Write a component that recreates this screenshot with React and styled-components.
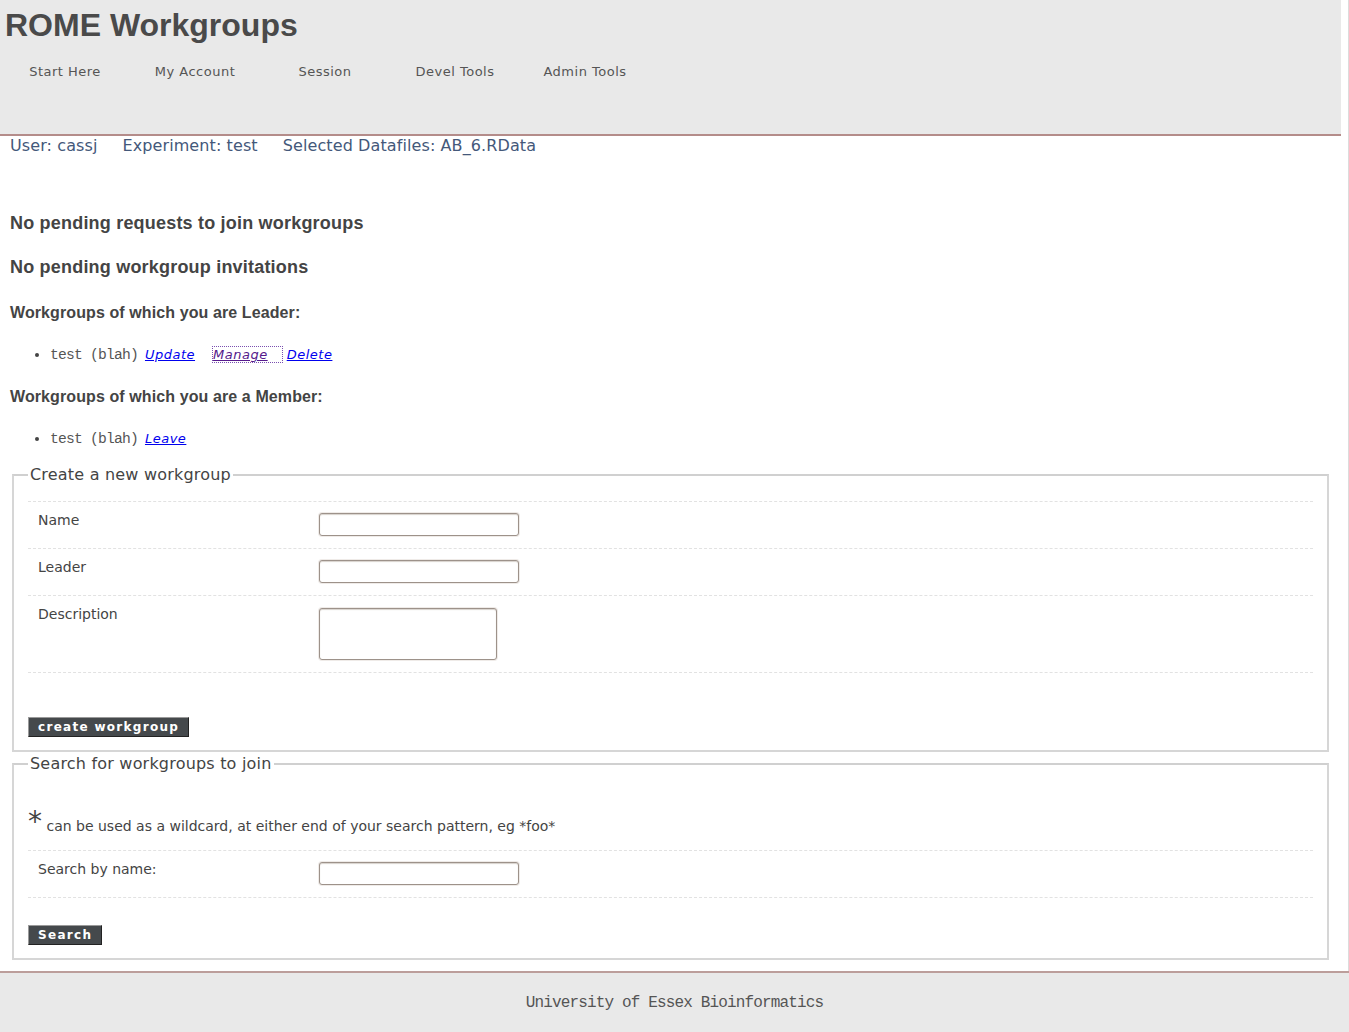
import React from 'react'
import styled, { createGlobalStyle } from 'styled-components'

const GlobalStyle = createGlobalStyle`
html, body {
    margin:0;
    padding:0;
    background:#fff;
}
body {
    font-family:"DejaVu Sans", Verdana, sans-serif;
    color:#444;
}
`

function FormRow({ label, children, top }) {
    return (
        <Row>
            <Label>{label}</Label>
            <Control $top={top}>{children}</Control>
        </Row>
    )
}

function App() {
    const navItems = ['Start Here', 'My Account', 'Session', 'Devel Tools', 'Admin Tools']

    return (
        <>
            <GlobalStyle />
            <Page>
                <Header>
                    <Title>ROME Workgroups</Title>
                    <Nav>
                        {navItems.map(item => <NavItem key={item}>{item}</NavItem>)}
                    </Nav>
                </Header>
                <Main>
                    <UserBar>
                        <span>User: cassj</span>
                        <span>Experiment: test</span>
                        <span>Selected Datafiles: AB_6.RData</span>
                    </UserBar>

                    <H3 $top={58}>No pending requests to join workgroups</H3>
                    <H3 $top={23}>No pending workgroup invitations</H3>

                    <H4 $top={25}>Workgroups of which you are Leader:</H4>
                    <List $top={23}>
                        <Item>
                            <Group>test (blah)</Group>
                            <Link href="#" $left={7}>Update</Link>
                            <Link href="#" $left={18} $visited>Manage</Link>
                            <Link href="#" $left={5}>Delete</Link>
                        </Item>
                    </List>

                    <H4 $top={22}>Workgroups of which you are a Member:</H4>
                    <List $top={23}>
                        <Item>
                            <Group>test (blah)</Group>
                            <Link href="#" $left={7}>Leave</Link>
                        </Item>
                    </List>

                    <Fieldset $top={16}>
                        <Legend>Create a new workgroup</Legend>
                        <Rows $top={17}>
                            <FormRow label="Name"><Input type="text" /></FormRow>
                            <FormRow label="Leader"><Input type="text" /></FormRow>
                            <FormRow label="Description" top={2}><TextArea /></FormRow>
                        </Rows>
                        <Button $top={44}>create workgroup</Button>
                    </Fieldset>

                    <Fieldset $top={2}>
                        <Legend>Search for workgroups to join</Legend>
                        <Hint><Star>*</Star> can be used as a wildcard, at either end of your search pattern, eg *foo*</Hint>
                        <Rows $top={12}>
                            <FormRow label="Search by name:"><Input type="text" /></FormRow>
                        </Rows>
                        <Button $top={27}>Search</Button>
                    </Fieldset>
                </Main>
            </Page>
            <Footer>University of Essex Bioinformatics</Footer>
        </>
    )
}

export default App

const Page = styled.div`
border-right:1px solid #dcdcdc;
padding-bottom:11px;
`
const Header = styled.div`
margin-right:7px;
height:134px;
background-color:#e9e9e9;
border-bottom:2px solid #b48c8a;
`
const Title = styled.h1`
margin:0;
padding:7px 0 0 5px;
font-family:"Liberation Sans", Arial, sans-serif;
font-size:32px;
line-height:37px;
font-weight:bold;
color:#4a4a4a;
`
const Nav = styled.ul`
display:flex;
margin:20px 0 0;
padding:0;
list-style:none;
`
const NavItem = styled.li`
width:130px;
text-align:center;
font-size:13px;
line-height:16px;
letter-spacing:0.5px;
color:#555;
`
const Main = styled.div`
padding:0 9px 0 10px;
margin-right:8px;
`
const UserBar = styled.div`
display:flex;
gap:25px;
font-size:16px;
line-height:19px;
letter-spacing:0.1px;
color:#44587a;
`
const H3 = styled.h3`
margin:${p => p.$top}px 0 0;
font-family:"Liberation Sans", Arial, sans-serif;
font-size:18px;
line-height:21px;
font-weight:bold;
color:#444;
letter-spacing:0.2px;
`
const H4 = styled.h4`
margin:${p => p.$top}px 0 0;
font-family:"Liberation Sans", Arial, sans-serif;
font-size:16px;
line-height:19px;
font-weight:bold;
color:#444;
letter-spacing:0.1px;
`
const List = styled.ul`
margin:${p => p.$top}px 0 0;
padding-left:40px;
`
const Item = styled.li`
font-size:13px;
line-height:20px;
color:#444;
`
const Group = styled.span`
font-family:"Liberation Mono", "Courier New", monospace;
font-size:14.67px;
letter-spacing:-0.8px;
color:#555;
`
const Link = styled.a`
margin-left:${p => p.$left}px;
font-style:italic;
font-size:13px;
letter-spacing:0.5px;
color:${p => p.$visited ? '#551a8b' : '#0000ee'};
text-decoration:underline;
${p => p.$visited && `
    outline:1px dotted #7a4fb0;
    padding-right:14px;
`}
`
const Fieldset = styled.fieldset`
margin:${p => p.$top}px 2px 0;
padding:0 14px 13px;
border:2px solid #d6d6d6;
border-top-color:#d0d0d0;
`
const Legend = styled.legend`
padding:0 2px;
font-size:16px;
line-height:19px;
letter-spacing:0.2px;
color:#444;
`
const Rows = styled.div`
margin-top:${p => p.$top}px;
border-bottom:1px dashed #e2e2e2;
`
const Row = styled.div`
display:grid;
grid-template-columns:281px 1fr;
align-items:start;
padding:10px 0 12px 10px;
border-top:1px dashed #e2e2e2;
`
const Label = styled.label`
font-size:14px;
line-height:17px;
color:#444;
`
const Control = styled.div`
margin-top:${p => p.$top ?? 1}px;
display:flex;
`
const Input = styled.input`
box-sizing:border-box;
width:200px;
height:23px;
margin:0;
border:1px solid #9d928a;
border-radius:3px;
box-shadow:0 0 0 1px #efebe8, inset 0 1px 1px #d8d2cc;
background:#fff;
`
const TextArea = styled.textarea`
box-sizing:border-box;
width:178px;
height:52px;
margin:0;
resize:none;
border:1px solid #9d928a;
border-radius:3px;
box-shadow:0 0 0 1px #efebe8, inset 0 1px 1px #d8d2cc;
background:#fff;
`
const Button = styled.button`
display:block;
margin-top:${p => p.$top}px;
height:20px;
padding:0 9px;
font-family:"DejaVu Sans", Verdana, sans-serif;
font-size:12px;
font-weight:bold;
letter-spacing:1.3px;
line-height:18px;
color:#fff;
background-color:#45494c;
border:1px solid;
border-color:#9a9a9a #222 #222 #9a9a9a;
border-radius:0;
`
const Hint = styled.p`
margin:32px 0 0;
font-size:14px;
color:#444;
`
const Star = styled.span`
font-size:28px;
`
const Footer = styled.div`
padding:21px 0 24px;
background-color:#e9e9e9;
border-top:2px solid #bc9e9b;
text-align:center;
font-family:"Liberation Mono", "Courier New", monospace;
font-size:16px;
letter-spacing:-0.85px;
line-height:18px;
color:#555;
`
